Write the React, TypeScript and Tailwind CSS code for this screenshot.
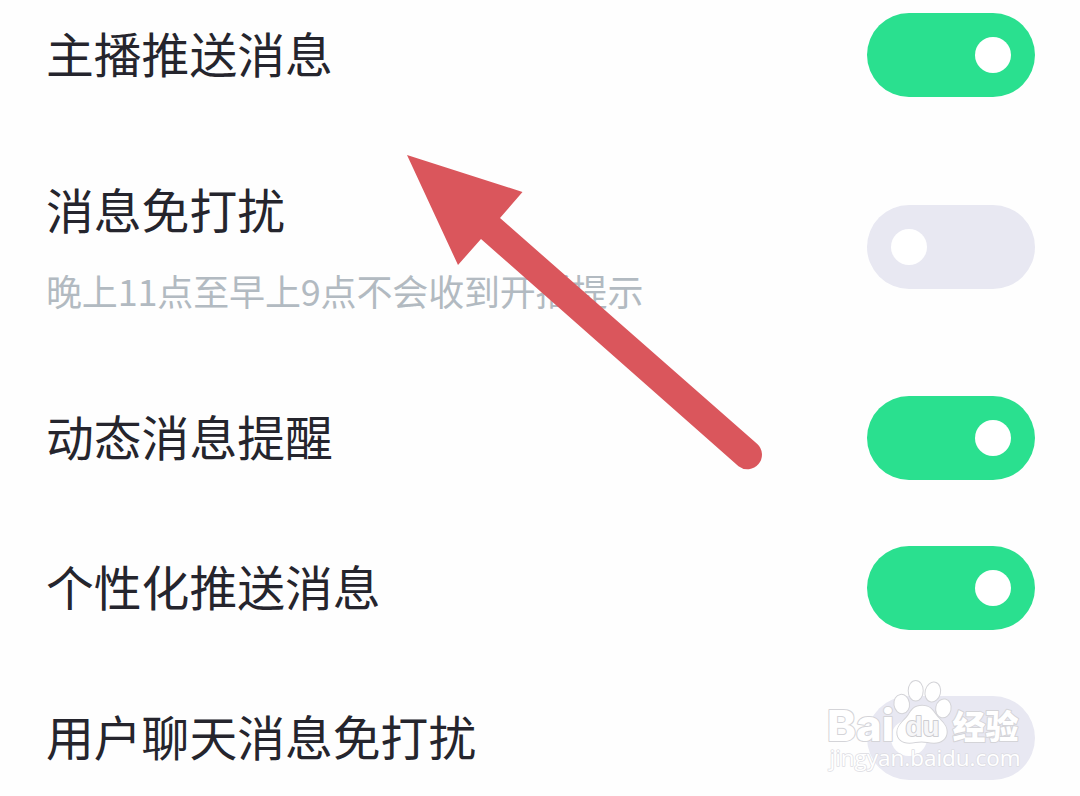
import React, { useState } from 'react';

interface Setting {
  id: string;
  label: string;
  hint?: string;
  enabled: boolean;
}

const initialSettings: Setting[] = [
  { id: 'anchor', label: '主播推送消息', enabled: true },
  { id: 'dnd', label: '消息免打扰', hint: '晚上11点至早上9点不会收到开播提示', enabled: false },
  { id: 'feed', label: '动态消息提醒', enabled: true },
  { id: 'personal', label: '个性化推送消息', enabled: true },
  { id: 'chat', label: '用户聊天消息免打扰', enabled: false },
];

const Toggle: React.FC<{ label: string; checked: boolean; onChange: () => void }> = ({ label, checked, onChange }) => (
  <button
    role="switch"
    aria-label={label}
    aria-checked={checked}
    onClick={onChange}
    className={`flex h-[84px] w-[168px] shrink-0 items-center rounded-full px-6 ${checked ? 'justify-end bg-[#2ae08f]' : 'justify-start bg-[#e8e8f2]'}`}
  >
    <span className="h-9 w-9 rounded-full bg-white"></span>
  </button>
);

const Arrow = () => (
  <svg className="pointer-events-none absolute left-0 top-0" width="1080" height="796" viewBox="0 0 1080 796">
    <path d="M407 155 L522.5 192 L500 218 L757.3 444 A14.6 14.6 0 0 1 738.5 466.3 L481 239 L458 265 Z" fill="#da565c" />
  </svg>
);

const Watermark = () => (
  <svg className="pointer-events-none absolute left-0 top-0" width="1080" height="796" viewBox="0 0 1080 796">
    <g fill="#fff" stroke="#d4d4d8" strokeWidth="2" strokeLinejoin="round" style={{ paintOrder: 'stroke' }}>
      <text x="827" y="740.5" fontSize="43" fontWeight="800" textLength="67" lengthAdjust="spacingAndGlyphs" fontFamily="Inter, sans-serif">Bai</text>
      <ellipse cx="901.7" cy="704" rx="7.3" ry="9.2" transform="rotate(-8 901.7 704)" />
      <ellipse cx="915.7" cy="690.8" rx="7" ry="9.8" />
      <ellipse cx="932.8" cy="692" rx="7.2" ry="9.6" transform="rotate(14 932.8 692)" />
      <ellipse cx="943.4" cy="708.4" rx="7.2" ry="9" transform="rotate(12 943.4 708.4)" />
      <path d="M922.3 705.7 C930 705.7 932.5 710 936 715 C940 720.5 946.7 724 946.7 731.7 C946.7 738.5 941.5 742.7 934 742.7 C929 742.7 926 741.5 921.5 741.5 C917 741.5 914 742.7 909.5 742.7 C902 742.7 897.3 739 897.3 732.3 C897.3 724.5 904.5 721 908.5 715 C912 709.5 914.5 705.7 922.3 705.7 Z" />
      <text x="905.5" y="735.5" fontSize="28" textLength="34" lengthAdjust="spacingAndGlyphs" fontFamily="'Liberation Sans', sans-serif" fontWeight="700" fill="#f6f6f8" stroke="#cdcdd1">du</text>
      <text x="952.5" y="738.5" fontSize="33" fontWeight="900" fontFamily="'Noto Sans CJK SC', sans-serif">经验</text>
      <text x="829.5" y="766" fontSize="22.5" strokeWidth="1.4" textLength="191" lengthAdjust="spacingAndGlyphs" fontFamily="'Open Sans', sans-serif" fontWeight="500" stroke="#dcdce2">jingyan.baidu.com</text>
    </g>
  </svg>
);

export default function App() {
  const [settings, setSettings] = useState<Setting[]>(initialSettings);

  const toggle = (id: string) => {
    setSettings(settings.map(s => (s.id === id ? { ...s, enabled: !s.enabled } : s)));
  };

  return (
    <div className="relative h-[796px] w-[1080px] overflow-hidden bg-[#fefefe] font-['Noto_Sans_CJK_SC',sans-serif]">
      <ul className="-mt-5 flex flex-col">
        {settings.map(item => (
          <li
            key={item.id}
            className={`flex items-center justify-between pl-[46px] pr-[45px] ${item.hint ? 'h-[233px]' : 'h-[150px]'}`}
          >
            <div className={item.hint ? 'pb-px' : 'pb-[5px]'}>
              <p className="text-[47.8px] leading-[60px] text-[#25252d]">{item.label}</p>
              {item.hint && (
                <p className="mt-[27px] text-[36px] leading-[48px] tracking-[-0.15px] text-[#b2bac1]">{item.hint}</p>
              )}
            </div>
            <Toggle label={item.label} checked={item.enabled} onChange={() => toggle(item.id)} />
          </li>
        ))}
      </ul>
      <Arrow />
      <Watermark />
    </div>
  );
}
